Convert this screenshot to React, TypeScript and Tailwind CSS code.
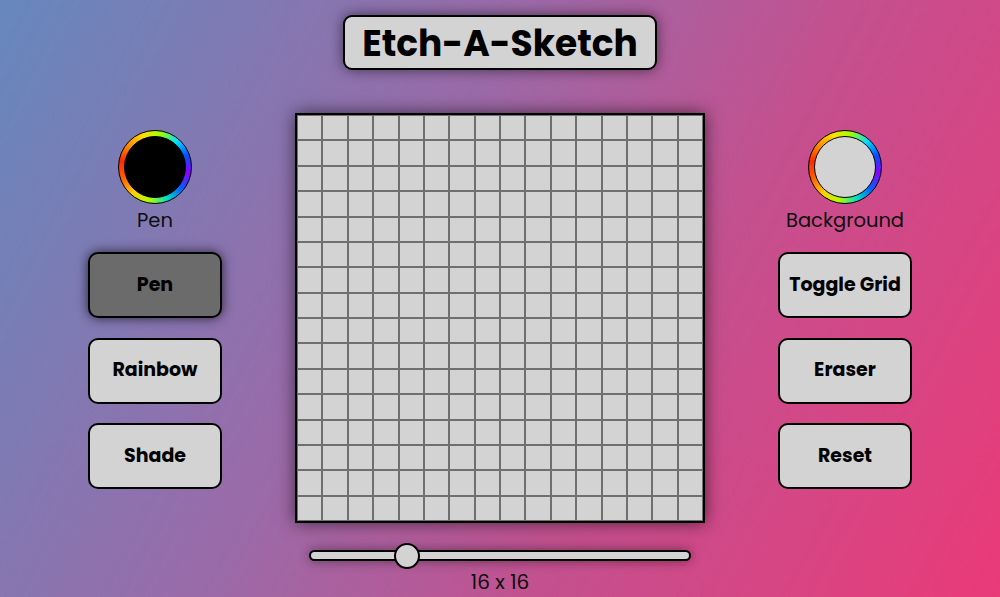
import React from "react";

const font = { fontFamily: "Poppins, Inter, 'Open Sans', sans-serif" };

function Swatch({ color }: { color: string }) {
  return (
    <div className="w-[74px] h-[74px] rounded-full border border-black p-[5px] bg-[conic-gradient(from_-80deg,#ff2a00,#ff9000,#ffe000,#9dff00,#00e0ff,#0050ff,#8a00ff,#0060ff,#00e0c0,#b0ff00,#ffd000,#ff6000,#ff2a00)]">
      <div className="w-full h-full rounded-full border border-black" style={{ background: color }} />
    </div>
  );
}

function Btn({ label, active }: { label: string; active?: boolean }) {
  return (
    <div
      className={
        "w-[134px] h-[66px] rounded-[10px] border-2 border-black flex items-center justify-center text-[19px] font-bold text-black " +
        (active ? "bg-[#6b6b6b] shadow-[0_0_12px_rgba(0,0,0,0.7)]" : "bg-[#d3d3d3]")
      }
    >
      {label}
    </div>
  );
}

export default function App() {
  const cells = Array.from({ length: 256 });
  return (
    <div
      className="w-[1000px] h-[597px] overflow-hidden flex flex-col items-center bg-[linear-gradient(118deg,#6688bd_0%,#9b6aa8_40%,#c4508f_65%,#ea3a78_100%)]"
      style={font}
    >
      <div className="mt-[15px] w-[314px] h-[55px] pt-[3px] rounded-[9px] border-2 border-black bg-[#d3d3d3] flex items-center justify-center text-[36px] font-bold text-black shadow-[0_0_14px_rgba(0,0,0,0.55)]">
        Etch-A-Sketch
      </div>
      <div className="mt-[43px] flex gap-[73px]">
        <div className="w-[134px] flex flex-col items-center pt-[17px]">
          <Swatch color="#000" />
          <div className="mt-[3px] text-[19.5px] leading-[28px] text-[#0d0d0d]">Pen</div>
          <div className="mt-[17px] flex flex-col gap-[19.5px]">
            <Btn label="Pen" active />
            <Btn label="Rainbow" />
            <Btn label="Shade" />
          </div>
        </div>
        <div className="flex flex-col items-center">
          <div className="w-[410px] h-[410px] border-2 border-black bg-[#d3d3d3] grid grid-cols-16 grid-rows-16 shadow-[0_0_16px_rgba(0,0,0,0.6)]">
            {cells.map((_, i) => (
              <div key={i} className="border border-[#6f6f6f] bg-[#d3d3d3]" />
            ))}
          </div>
          <div className="mt-[27px] relative w-[382px] h-[11px] rounded-full border-2 border-black bg-[#d3d3d3] shadow-[0_0_12px_rgba(0,0,0,0.45)]">
            <div className="absolute left-[83px] top-[-9px] w-[26px] h-[26px] rounded-full border-2 border-black bg-[#d3d3d3]" />
          </div>
          <div className="mt-[7px] text-[20px] leading-[28px] text-[#0d0d0d]">16 x 16</div>
        </div>
        <div className="w-[134px] flex flex-col items-center pt-[17px]">
          <Swatch color="#d3d3d3" />
          <div className="mt-[3px] text-[19.5px] leading-[28px] text-[#0d0d0d]">Background</div>
          <div className="mt-[17px] flex flex-col gap-[19.5px]">
            <Btn label="Toggle Grid" />
            <Btn label="Eraser" />
            <Btn label="Reset" />
          </div>
        </div>
      </div>
    </div>
  );
}
